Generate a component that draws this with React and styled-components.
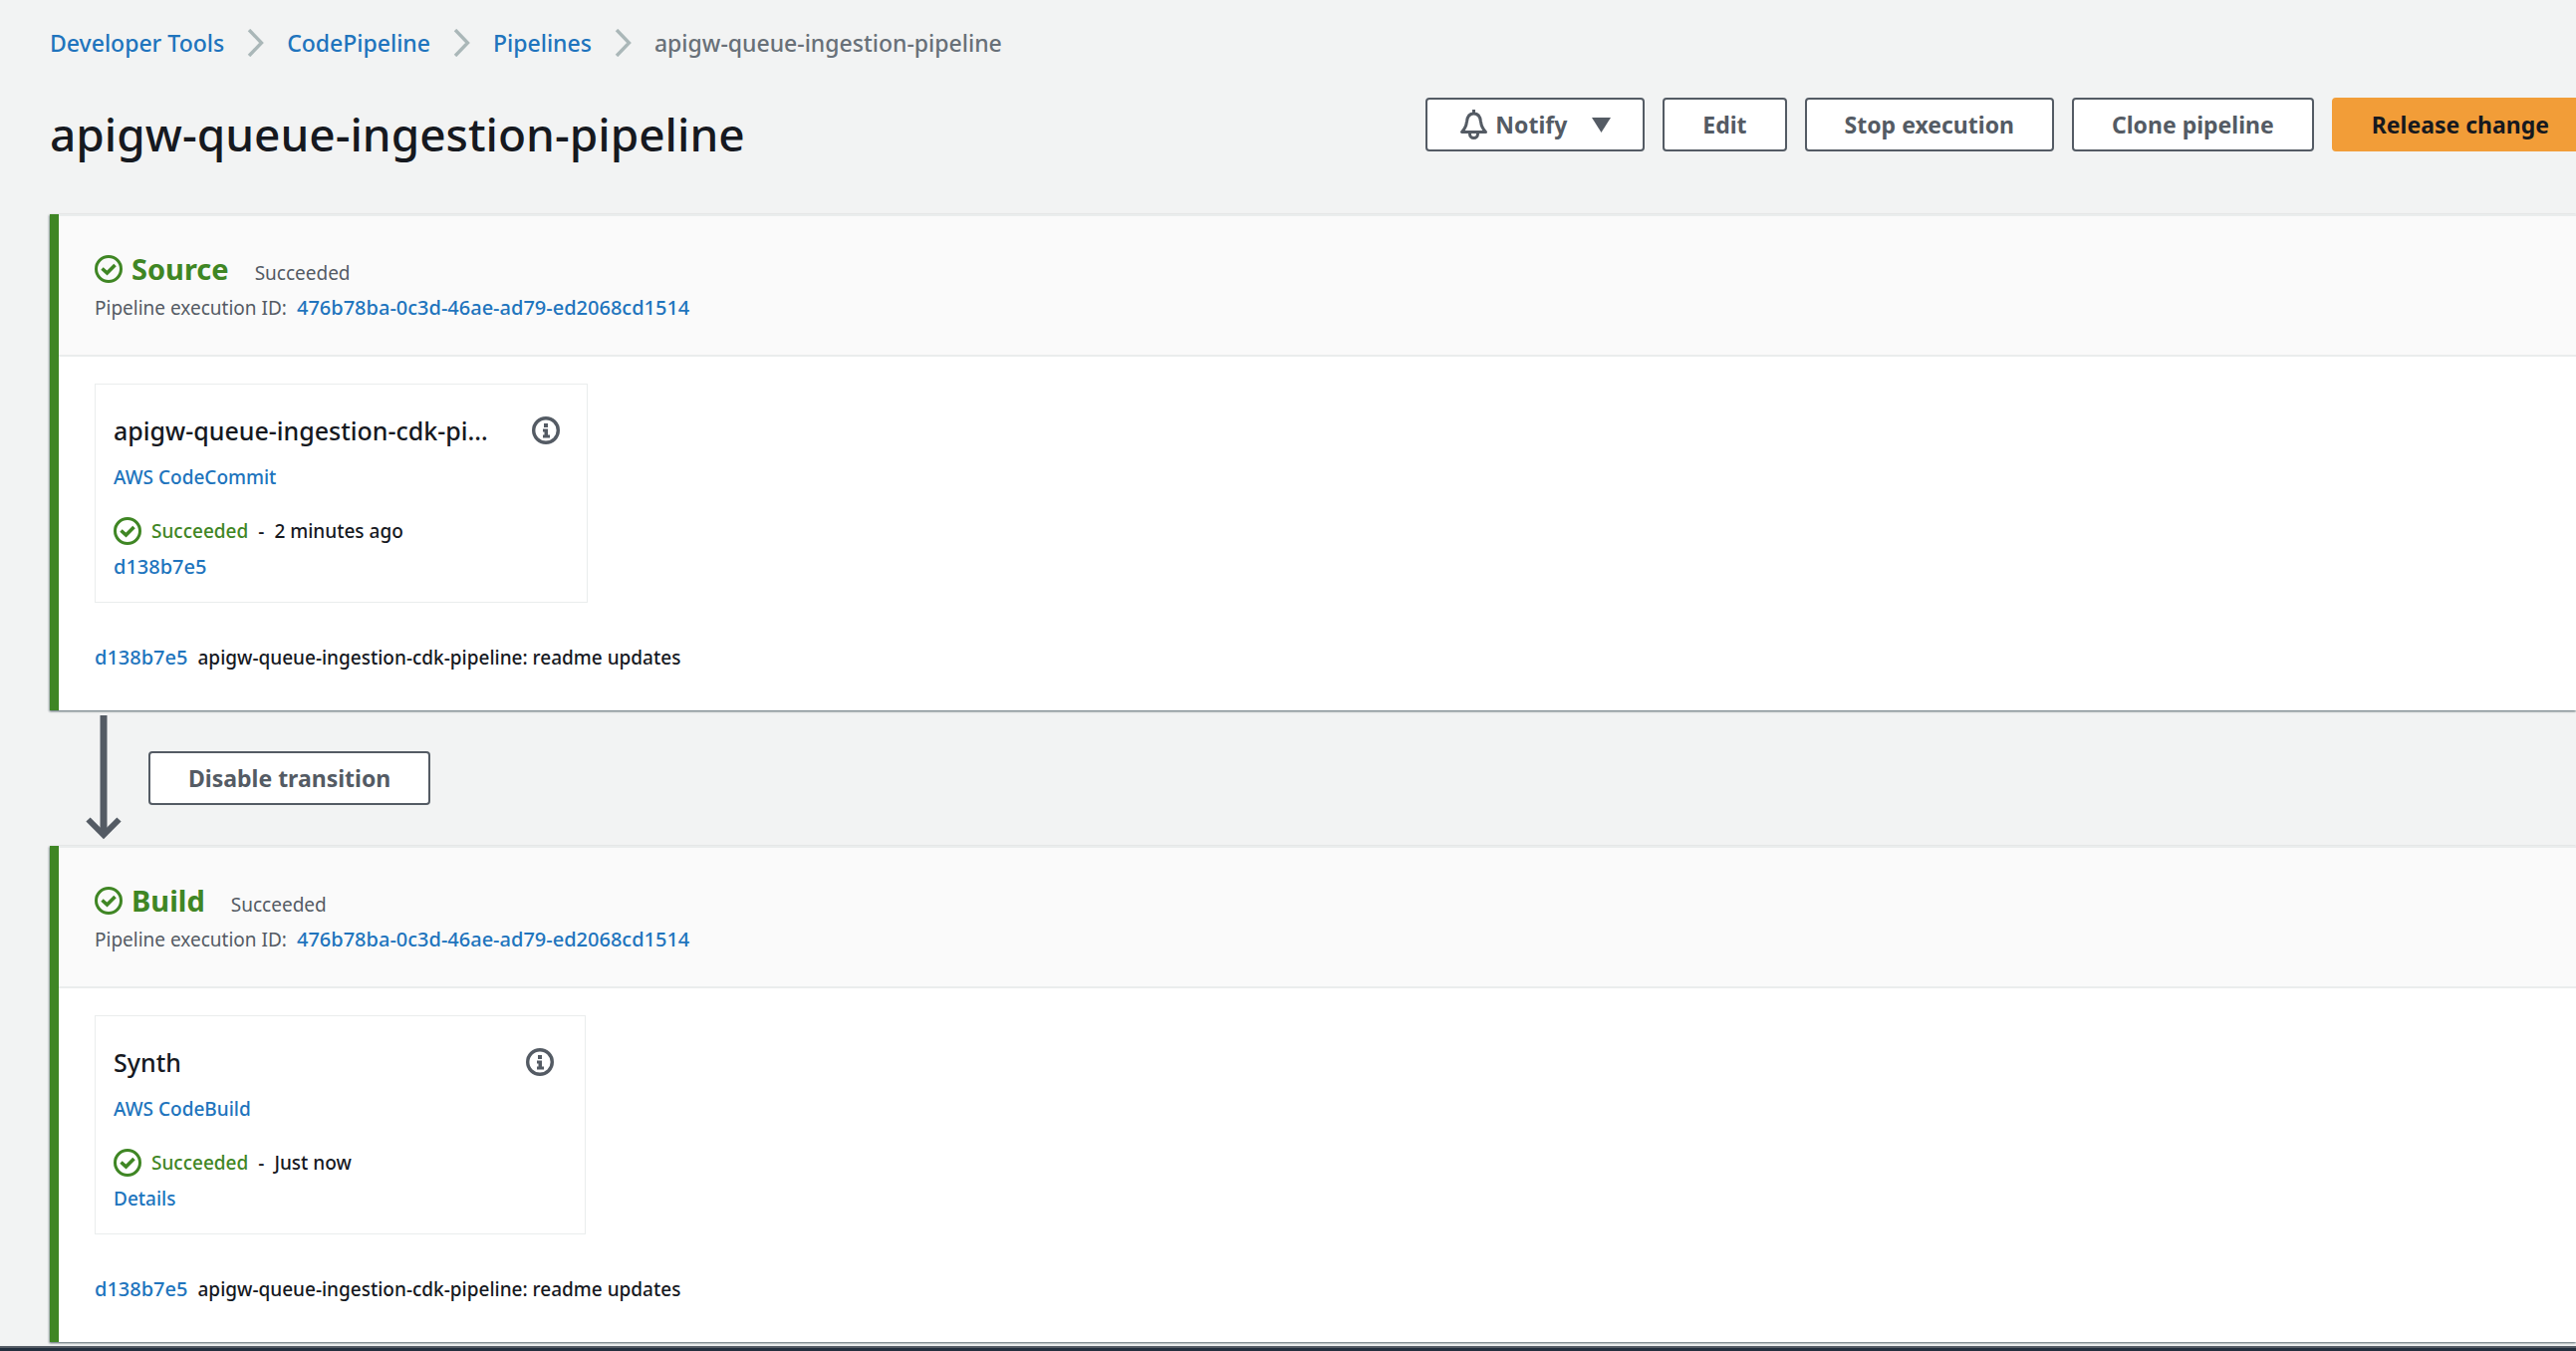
import React from "react";
import styled, { createGlobalStyle } from "styled-components";

const GlobalStyle = createGlobalStyle`
  * { box-sizing: border-box; }
  body {
    margin: 0;
    overflow-x: hidden;
    background: #f2f3f3;
    color: #16191f;
    font-family: "Noto Sans", "Open Sans", sans-serif;
    font-size: 19px;
    line-height: 28px;
  }
`;

const Page = styled.div`
  min-height: 100vh;
  display: flex;
  flex-direction: column;
`;

const Main = styled.main`
  flex: 1;
  padding: 28px 0 4px 50px;
`;

const Link = styled.a`
  color: #2074bd;
  text-decoration: none;
  font-weight: 500;
`;

const HashLink = styled(Link)`
  font-size: 20px;
`;

const Breadcrumbs = styled.nav`
  display: flex;
  align-items: center;
  gap: 23px;
  font-size: 23px;
  line-height: 30px;
  font-weight: 500;
  color: #687078;
`;

const PageHeader = styled.header`
  display: flex;
  justify-content: space-between;
  align-items: flex-start;
  margin: 40px -13px 51px 0;
`;

const Title = styled.h1`
  margin: 0;
  padding-top: 6px;
  font-size: 46px;
  line-height: 60px;
  font-weight: 500;
`;

const Actions = styled.div`
  display: flex;
  gap: 18px;
`;

const Button = styled.button`
  display: flex;
  align-items: center;
  height: 54px;
  padding: 0 ${(p) => (p.$menu ? 32 : 38)}px;
  border: 2px solid ${(p) => (p.$primary ? "#f29d38" : "#545b64")};
  border-radius: 4px;
  background: ${(p) => (p.$primary ? "#f29d38" : "#fff")};
  color: ${(p) => (p.$primary ? "#16191f" : "#545b64")};
  font-family: inherit;
  font-size: 23px;
  line-height: 30px;
  font-weight: 700;
  white-space: nowrap;
`;

const ButtonLabel = styled.span`
  padding: 0 25px 0 7px;
`;

const Stage = styled.section`
  border-left: 9px solid #3f8624;
  background: #fff;
  box-shadow: 0 1px 2px rgba(0, 28, 36, 0.5), -1px 1px 2px rgba(0, 28, 36, 0.25);
`;

const StageHeader = styled.div`
  padding: 36px 36px 33px;
  border-top: 2px solid #eaeded;
  border-bottom: 2px solid #eaeded;
  background: #fafafa;
  color: #545b64;
`;

const StageTitleRow = styled.div`
  display: flex;
  align-items: flex-end;
  gap: 26px;
  margin-bottom: 8px;
`;

const StageTitle = styled.h2`
  display: flex;
  align-items: center;
  gap: 9px;
  margin: 0;
  color: #3f8624;
  font-size: 29px;
  line-height: 34px;
  font-weight: 700;
`;

const StageStatus = styled.span`
  line-height: 26px;
`;

const Inline = styled.div`
  display: flex;
  align-items: center;
  gap: 10px;
`;

const StageBody = styled.div`
  padding: 27px 36px 39px;
`;

const ActionCard = styled.article`
  width: ${(p) => p.$width}px;
  max-width: 100%;
  margin-bottom: 41px;
  padding: 28px ${(p) => p.$inset}px 21px 18px;
  border: 1px solid #eaeded;
`;

const CardHeader = styled.div`
  display: flex;
  align-items: center;
  justify-content: space-between;
  margin-bottom: 15px;
`;

const CardTitle = styled.h3`
  margin: 0;
  width: 390px;
  overflow: hidden;
  text-overflow: ellipsis;
  white-space: nowrap;
  font-size: 25px;
  line-height: 36px;
  font-weight: 500;
`;

const IconButton = styled.button`
  display: flex;
  padding: 0;
  border: 0;
  background: none;
  color: #545b64;
`;

const StatusRow = styled(Inline)`
  margin: 26px 0 8px;
  font-weight: 500;
`;

const Success = styled.span`
  color: #3f8624;
`;

const Message = styled.span`
  font-weight: 500;
`;

const Transition = styled.div`
  display: flex;
  align-items: center;
  gap: 27px;
  height: 136px;
  padding-left: 36px;
`;

const ArrowSlot = styled.div`
  align-self: flex-end;
  margin-bottom: 5px;
`;

const Footer = styled.footer`
  height: 5px;
  border-top: 2px solid #545b64;
  background: #232f3e;
`;

const Icon = styled.svg`
  display: block;
  flex: none;
  fill: none;
  stroke: currentColor;
`;

const SuccessIcon = () => (
  <Icon width="28" height="28" viewBox="0 0 28 28" strokeWidth="3" color="#3f8624" aria-hidden="true">
    <circle cx="14" cy="14" r="12.5" />
    <path d="M7.5 13.5 12.5 18 20.5 10" strokeWidth="3.6" />
  </Icon>
);

const InfoIcon = () => (
  <Icon width="28" height="28" viewBox="0 0 28 28" strokeWidth="3.4" aria-hidden="true">
    <circle cx="14" cy="14" r="12.3" />
    <path d="M12 7h4v4h-4zM11 12.5h5v6h2v3h-7v-3h1.5v-3H11z" fill="currentColor" stroke="none" />
  </Icon>
);

const Chevron = () => (
  <Icon width="17" height="28" viewBox="0 0 17 28" color="#aab7b8" strokeWidth="3.4" aria-hidden="true">
    <path d="M2 1 14.5 14 2 27" />
  </Icon>
);

const BellIcon = () => (
  <Icon width="29" height="30" viewBox="0 0 29 30" strokeWidth="3" aria-hidden="true">
    <path d="M14.5 0v3.500M2.500 22.500h24C22.500 18.500 22 16 21.500 12 21 7 18.500 4 14.500 4S8 7 7.500 12C7 16 6.500 18.500 2.500 22.500z" strokeLinejoin="round" />
    <path d="M10.500 23v1.500a4 4 0 0 0 8 0V23" />
  </Icon>
);

const CaretIcon = () => (
  <Icon width="19" height="15" viewBox="0 0 19 15" aria-hidden="true">
    <path d="M0 0h19L9.500 15z" fill="currentColor" stroke="none" />
  </Icon>
);

const ArrowIcon = () => (
  <Icon width="36" height="126" viewBox="0 0 36 126" color="#545b64" aria-hidden="true">
    <path d="M18 0v118" strokeWidth="7" />
    <path d="M2.500 104.500 18 120 33.500 104.500" strokeWidth="6" />
  </Icon>
);

const EXECUTION_ID = "476b78ba-0c3d-46ae-ad79-ed2068cd1514";
const COMMIT_ID = "d138b7e5";

const stages = [
  {
    name: "Source",
    action: "apigw-queue-ingestion-cdk-pipeline",
    provider: "AWS CodeCommit",
    time: "2 minutes ago",
    detail: <HashLink href="#commit">{COMMIT_ID}</HashLink>,
    width: 495,
    inset: 27,
  },
  {
    name: "Build",
    action: "Synth",
    provider: "AWS CodeBuild",
    time: "Just now",
    detail: <Link href="#details">Details</Link>,
    width: 493,
    inset: 31,
  },
];

const PipelineStage = ({ stage }) => (
  <Stage>
    <StageHeader>
      <StageTitleRow>
        <StageTitle>
          <SuccessIcon />
          {stage.name}
        </StageTitle>
        <StageStatus>Succeeded</StageStatus>
      </StageTitleRow>
      <Inline>
        <span>Pipeline execution ID:</span>
        <HashLink href="#execution">{EXECUTION_ID}</HashLink>
      </Inline>
    </StageHeader>
    <StageBody>
      <ActionCard $width={stage.width} $inset={stage.inset}>
        <CardHeader>
          <CardTitle>{stage.action}</CardTitle>
          <IconButton type="button" aria-label={`About ${stage.action}`}>
            <InfoIcon />
          </IconButton>
        </CardHeader>
        <Link href="#provider">{stage.provider}</Link>
        <StatusRow>
          <SuccessIcon />
          <Success>Succeeded</Success>
          <span>-</span>
          <span>{stage.time}</span>
        </StatusRow>
        {stage.detail}
      </ActionCard>
      <Inline>
        <HashLink href="#commit">{COMMIT_ID}</HashLink>
        <Message>apigw-queue-ingestion-cdk-pipeline: readme updates</Message>
      </Inline>
    </StageBody>
  </Stage>
);

export default function App() {
  return (
    <>
      <GlobalStyle />
      <Page>
        <Main>
          <Breadcrumbs aria-label="Breadcrumb">
            <Link href="#tools">Developer Tools</Link>
            <Chevron />
            <Link href="#codepipeline">CodePipeline</Link>
            <Chevron />
            <Link href="#pipelines">Pipelines</Link>
            <Chevron />
            <span>apigw-queue-ingestion-pipeline</span>
          </Breadcrumbs>
          <PageHeader>
            <Title>apigw-queue-ingestion-pipeline</Title>
            <Actions>
              <Button type="button" $menu>
                <BellIcon />
                <ButtonLabel>Notify</ButtonLabel>
                <CaretIcon />
              </Button>
              <Button type="button">Edit</Button>
              <Button type="button">Stop execution</Button>
              <Button type="button">Clone pipeline</Button>
              <Button type="button" $primary>Release change</Button>
            </Actions>
          </PageHeader>
          <PipelineStage stage={stages[0]} />
          <Transition>
            <ArrowSlot>
              <ArrowIcon />
            </ArrowSlot>
            <Button type="button">Disable transition</Button>
          </Transition>
          <PipelineStage stage={stages[1]} />
        </Main>
        <Footer />
      </Page>
    </>
  );
}
